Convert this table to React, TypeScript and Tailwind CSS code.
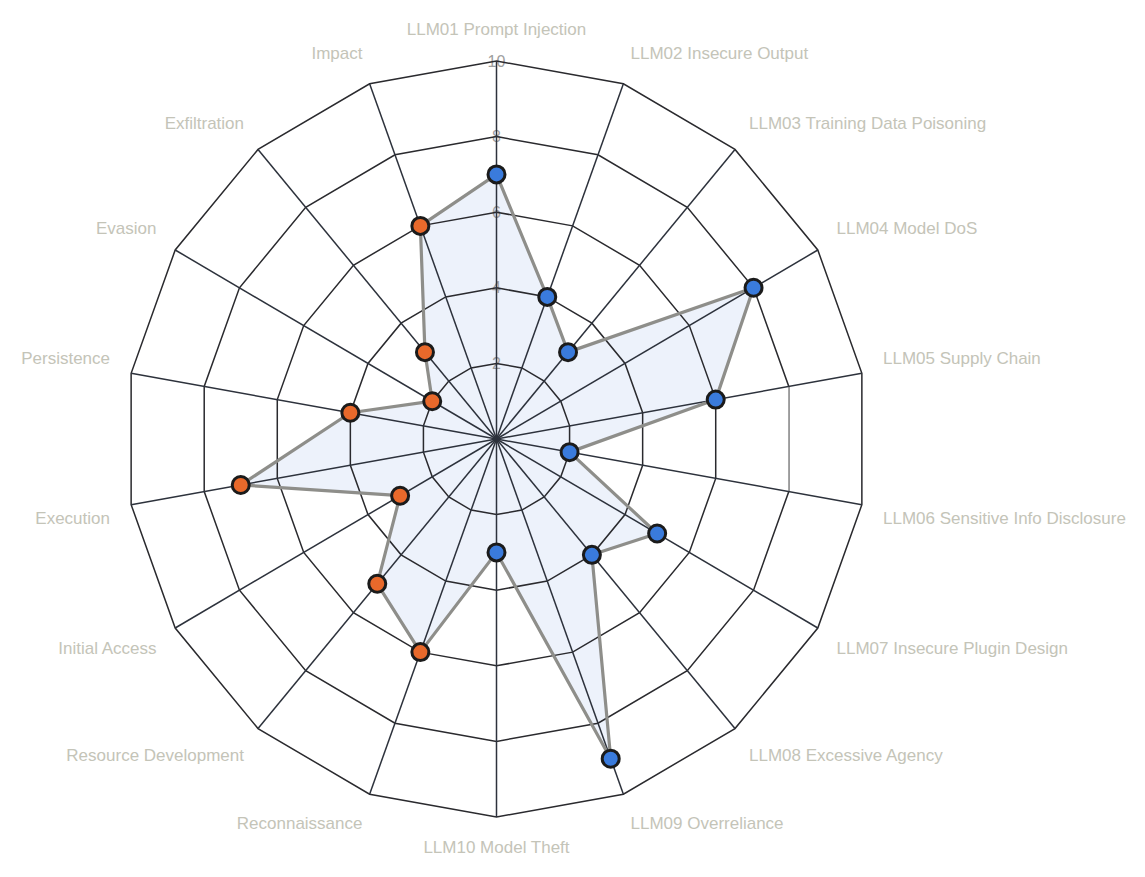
import React from "react";

// Radar chart of risk scores (OWASP LLM top 10 + ATT&CK tactics)
const CX = 496.5;
const CY = 439;
const RX = 37.1; // px per unit, horizontal
const RY = 37.8; // px per unit, vertical
const MAX = 10;

type Axis = {
  label: string;
  value: number;
  group: "llm" | "attack";
  lx: number;
  ly: number;
  anchor: "start" | "middle" | "end";
};

const axes: Axis[] = [
  { label: "LLM01 Prompt Injection", value: 7, group: "llm", lx: 496.5, ly: 35, anchor: "middle" },
  { label: "LLM02 Insecure Output", value: 4, group: "llm", lx: 630.5, ly: 59, anchor: "start" },
  { label: "LLM03 Training Data Poisoning", value: 3, group: "llm", lx: 749, ly: 129, anchor: "start" },
  { label: "LLM04 Model DoS", value: 8, group: "llm", lx: 836.5, ly: 234, anchor: "start" },
  { label: "LLM05 Supply Chain", value: 6, group: "llm", lx: 883, ly: 364, anchor: "start" },
  { label: "LLM06 Sensitive Info Disclosure", value: 2, group: "llm", lx: 883, ly: 524, anchor: "start" },
  { label: "LLM07 Insecure Plugin Design", value: 5, group: "llm", lx: 836.5, ly: 654, anchor: "start" },
  { label: "LLM08 Excessive Agency", value: 4, group: "llm", lx: 749, ly: 761, anchor: "start" },
  { label: "LLM09 Overreliance", value: 9, group: "llm", lx: 630.5, ly: 829, anchor: "start" },
  { label: "LLM10 Model Theft", value: 3, group: "llm", lx: 496.5, ly: 853, anchor: "middle" },
  { label: "Reconnaissance", value: 6, group: "attack", lx: 362.5, ly: 829, anchor: "end" },
  { label: "Resource Development", value: 5, group: "attack", lx: 244, ly: 761, anchor: "end" },
  { label: "Initial Access", value: 3, group: "attack", lx: 156.5, ly: 654, anchor: "end" },
  { label: "Execution", value: 7, group: "attack", lx: 110, ly: 524, anchor: "end" },
  { label: "Persistence", value: 4, group: "attack", lx: 110, ly: 364, anchor: "end" },
  { label: "Evasion", value: 2, group: "attack", lx: 156.5, ly: 234, anchor: "end" },
  { label: "Exfiltration", value: 3, group: "attack", lx: 244, ly: 129, anchor: "end" },
  { label: "Impact", value: 6, group: "attack", lx: 362.5, ly: 59, anchor: "end" },
];

const N = axes.length;

function pt(i: number, v: number): [number, number] {
  const a = (i * 2 * Math.PI) / N;
  return [CX + v * RX * Math.sin(a), CY - v * RY * Math.cos(a)];
}

function ring(v: number) {
  return axes.map((_, i) => pt(i, v).join(",")).join(" ");
}

export default function App() {
  const levels = [2, 4, 6, 8, 10];
  const dataPts = axes.map((a, i) => pt(i, a.value).join(",")).join(" ");
  const [g1x, g1y] = pt(4, 8);
  const [g2x, g2y] = pt(5, 8);

  return (
    <div className="w-[1145px] h-[877px] bg-white overflow-hidden">
      <svg
        width={1145}
        height={877}
        viewBox="0 0 1145 877"
        className="block font-['Liberation_Sans',Arial,sans-serif]"
      >
        {/* filled area */}
        <polygon points={dataPts} fill="#edf2fb" stroke="none" />

        {/* radial tick labels */}
        {levels.map((l) => (
          <text
            key={l}
            x={CX}
            y={CY - l * RY + 5.5}
            textAnchor="middle"
            fontSize={16}
            fill="#9e9e9e"
          >
            {l}
          </text>
        ))}

        {/* rings */}
        {levels.map((l) => (
          <polygon key={l} points={ring(l)} fill="none" stroke="#2a2a2e" strokeWidth={1.5} />
        ))}
        <line x1={g1x} y1={g1y} x2={g2x} y2={g2y} stroke="#a6a6a6" strokeWidth={1.6} />

        {/* spokes */}
        {axes.map((_, i) => {
          const [x, y] = pt(i, MAX);
          return <line key={i} x1={CX} y1={CY} x2={x} y2={y} stroke="#2d323c" strokeWidth={1.5} />;
        })}

        {/* outline */}
        <polygon points={dataPts} fill="none" stroke="#8e8e8a" strokeWidth={3.2} strokeLinejoin="round" />

        {/* markers */}
        {axes.map((a, i) => {
          const [x, y] = pt(i, a.value);
          return (
            <circle
              key={i}
              cx={x}
              cy={y}
              r={8.5}
              fill={a.group === "llm" ? "#3a7bdc" : "#e8692b"}
              stroke="#1b1b1b"
              strokeWidth={3}
            />
          );
        })}

        {/* axis labels */}
        {axes.map((a) => (
          <text key={a.label} x={a.lx} y={a.ly} textAnchor={a.anchor} fontSize={17} fill="#c4c4b8">
            {a.label}
          </text>
        ))}
      </svg>
    </div>
  );
}
